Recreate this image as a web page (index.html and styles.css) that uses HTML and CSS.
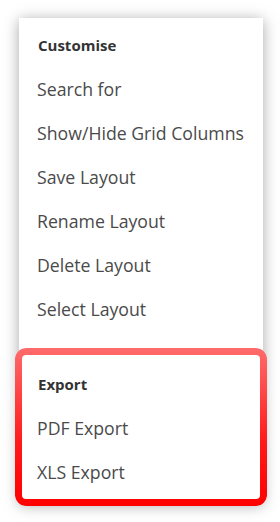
FILE: index.html
```html
<!DOCTYPE html>
<html>
<head>
<meta charset="utf-8">
<link rel="stylesheet" href="styles.css">
</head>
<body>
<div class="menu">
  <div class="section">
    <div class="heading">Customise</div>
    <div class="item">Search for</div>
    <div class="item">Show/Hide Grid Columns</div>
    <div class="item">Save Layout</div>
    <div class="item">Rename Layout</div>
    <div class="item">Delete Layout</div>
    <div class="item">Select Layout</div>
  </div>
  <div class="section export">
    <div class="heading">Export</div>
    <div class="item">PDF Export</div>
    <div class="item">XLS Export</div>
  </div>
</div>
</body>
</html>
```
FILE: styles.css
```css
html, body {
  margin: 0;
  padding: 0;
  background: #ffffff;
}
body {
  font-family: "Open Sans", "Noto Sans", sans-serif;
  width: 280px;
  height: 522px;
  overflow: hidden;
}
.menu {
  margin: 18px 0 0 19px;
  width: 244px;
  background: #ffffff;
  box-shadow: 0 2px 14px rgba(0, 0, 0, 0.35);
  padding: 5px 0 8px;
  display: flex;
  flex-direction: column;
  box-sizing: border-box;
  height: 485px;
}
.section {
  display: flex;
  flex-direction: column;
}
.heading {
  height: 44px;
  line-height: 44px;
  padding-left: 19px;
  font-size: 15px;
  font-weight: 700;
  color: #333333;
}
.item {
  height: 44px;
  line-height: 44px;
  padding-left: 18px;
  font-size: 17.7px;
  color: #4a4a4a;
  white-space: nowrap;
}
.export {
  margin-top: 31px;
  position: relative;
}
.export::after {
  content: "";
  position: absolute;
  top: -14px;
  left: -4px;
  right: -4px;
  bottom: -12px;
  padding: 7px;
  border-radius: 11px;
  background: linear-gradient(#ff6b6b, #ff1a1a 60%, #ff0000);
  -webkit-mask: linear-gradient(#000 0 0) content-box, linear-gradient(#000 0 0);
  -webkit-mask-composite: xor;
  mask-composite: exclude;
  filter: drop-shadow(0 2px 3px rgba(0, 0, 0, 0.2));
}
```
